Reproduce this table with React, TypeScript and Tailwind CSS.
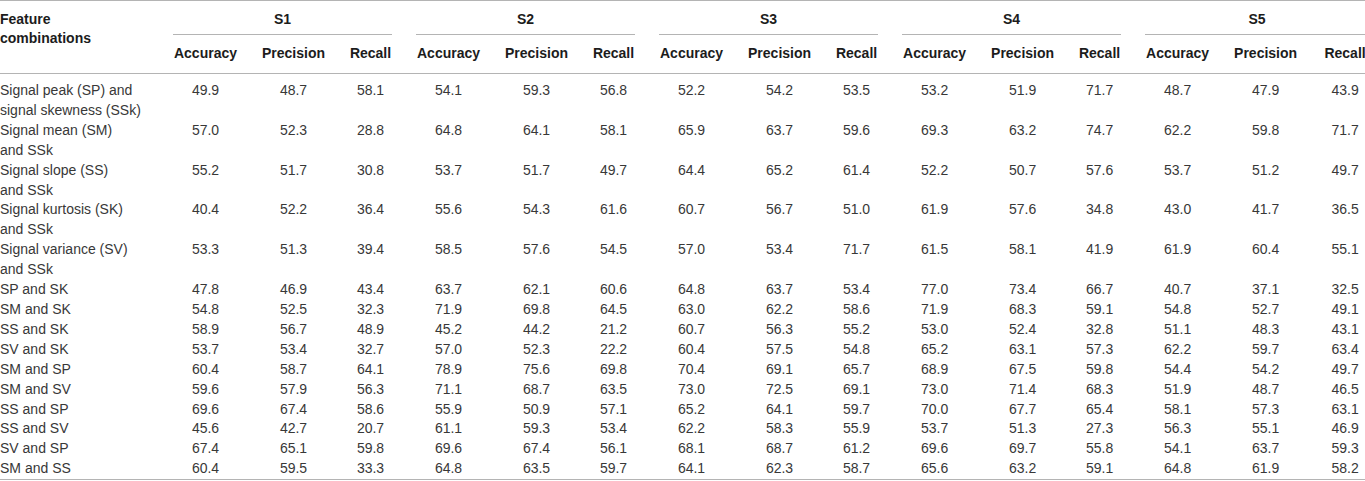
import React from "react";

type Row = { label: React.ReactNode; values: string[] };

const rows: Row[] = [
  { label: <>Signal peak (SP) and<br />signal skewness (SSk)</>, values: "49.9 48.7 58.1 54.1 59.3 56.8 52.2 54.2 53.5 53.2 51.9 71.7 48.7 47.9 43.9".split(" ") },
  { label: <>Signal mean (SM)<br />and SSk</>, values: "57.0 52.3 28.8 64.8 64.1 58.1 65.9 63.7 59.6 69.3 63.2 74.7 62.2 59.8 71.7".split(" ") },
  { label: <>Signal slope (SS)<br />and SSk</>, values: "55.2 51.7 30.8 53.7 51.7 49.7 64.4 65.2 61.4 52.2 50.7 57.6 53.7 51.2 49.7".split(" ") },
  { label: <>Signal kurtosis (SK)<br />and SSk</>, values: "40.4 52.2 36.4 55.6 54.3 61.6 60.7 56.7 51.0 61.9 57.6 34.8 43.0 41.7 36.5".split(" ") },
  { label: <>Signal variance (SV)<br />and SSk</>, values: "53.3 51.3 39.4 58.5 57.6 54.5 57.0 53.4 71.7 61.5 58.1 41.9 61.9 60.4 55.1".split(" ") },
  { label: "SP and SK", values: "47.8 46.9 43.4 63.7 62.1 60.6 64.8 63.7 53.4 77.0 73.4 66.7 40.7 37.1 32.5".split(" ") },
  { label: "SM and SK", values: "54.8 52.5 32.3 71.9 69.8 64.5 63.0 62.2 58.6 71.9 68.3 59.1 54.8 52.7 49.1".split(" ") },
  { label: "SS and SK", values: "58.9 56.7 48.9 45.2 44.2 21.2 60.7 56.3 55.2 53.0 52.4 32.8 51.1 48.3 43.1".split(" ") },
  { label: "SV and SK", values: "53.7 53.4 32.7 57.0 52.3 22.2 60.4 57.5 54.8 65.2 63.1 57.3 62.2 59.7 63.4".split(" ") },
  { label: "SM and SP", values: "60.4 58.7 64.1 78.9 75.6 69.8 70.4 69.1 65.7 68.9 67.5 59.8 54.4 54.2 49.7".split(" ") },
  { label: "SM and SV", values: "59.6 57.9 56.3 71.1 68.7 63.5 73.0 72.5 69.1 73.0 71.4 68.3 51.9 48.7 46.5".split(" ") },
  { label: "SS and SP", values: "69.6 67.4 58.6 55.9 50.9 57.1 65.2 64.1 59.7 70.0 67.7 65.4 58.1 57.3 63.1".split(" ") },
  { label: "SS and SV", values: "45.6 42.7 20.7 61.1 59.3 53.4 62.2 58.3 55.9 53.7 51.3 27.3 56.3 55.1 46.9".split(" ") },
  { label: "SV and SP", values: "67.4 65.1 59.8 69.6 67.4 56.1 68.1 68.7 61.2 69.6 69.7 55.8 54.1 63.7 59.3".split(" ") },
  { label: "SM and SS", values: "60.4 59.5 33.3 64.8 63.5 59.7 64.1 62.3 58.7 65.6 63.2 59.1 64.8 61.9 58.2".split(" ") },
];

const groups = ["S1", "S2", "S3", "S4", "S5"];
const subs = ["Accuracy", "Precision", "Recall"];

export default function App() {
  return (
    <div className="w-[1365px] overflow-hidden bg-white" style={{ fontFamily: '"Liberation Sans", Arial, sans-serif' }}>
      <table className="w-[1369px] table-fixed border-separate border-spacing-0 border-t border-b border-[#b4b4b4] text-[14px]">
        <colgroup>
          <col className="w-[161px]" />
          {groups.map((g, gi) => (
            <React.Fragment key={g}>
              <col className="w-[89px]" />
              <col className="w-[87px]" />
              <col className={gi === 4 ? "w-[60px]" : "w-[67px]"} />
            </React.Fragment>
          ))}
        </colgroup>
        <thead>
          <tr>
            <th rowSpan={2} className="border-b border-[#b4b4b4] p-0 pt-[9px] text-left align-top font-bold leading-[19px] text-[#1c1c1c]">
              Feature
              <br />
              combinations
            </th>
            {groups.map((g, gi) => (
              <th key={g} colSpan={3} className={`pl-3 ${gi === 4 ? "pr-0" : "pr-3"} py-0 align-top font-bold text-[#1c1c1c]`}>
                <div className="border-b border-[#b4b4b4] pt-2 pb-[5px] text-center leading-5">{g}</div>
              </th>
            ))}
          </tr>
          <tr>
            {groups.map((g, gi) =>
              subs.map((s, si) => (
                <th
                  key={g + s}
                  className={`border-b border-[#b4b4b4] pl-3 ${gi === 4 && si === 2 ? "pr-0" : "pr-3"} pt-2 pb-[10px] text-center align-top font-bold leading-5 whitespace-nowrap text-[#1c1c1c]`}
                >
                  {s}
                </th>
              ))
            )}
          </tr>
        </thead>
        <tbody>
          {rows.map((r, ri) => (
            <tr key={ri}>
              <td className={`${ri === 0 ? "pt-[7px]" : "pt-0"} pb-0 pl-0 pr-2 text-left align-top leading-[19.9px] whitespace-nowrap text-[#383838]`}>
                {r.label}
              </td>
              {r.values.map((v, vi) => (
                <td
                  key={vi}
                  className={`${ri === 0 ? "pt-[7px]" : "pt-0"} pb-0 pl-3 ${vi === 14 ? "pr-0" : "pr-3"} text-center align-top leading-[19.9px] text-[#383838]`}
                >
                  {v}
                </td>
              ))}
            </tr>
          ))}
        </tbody>
      </table>
    </div>
  );
}
